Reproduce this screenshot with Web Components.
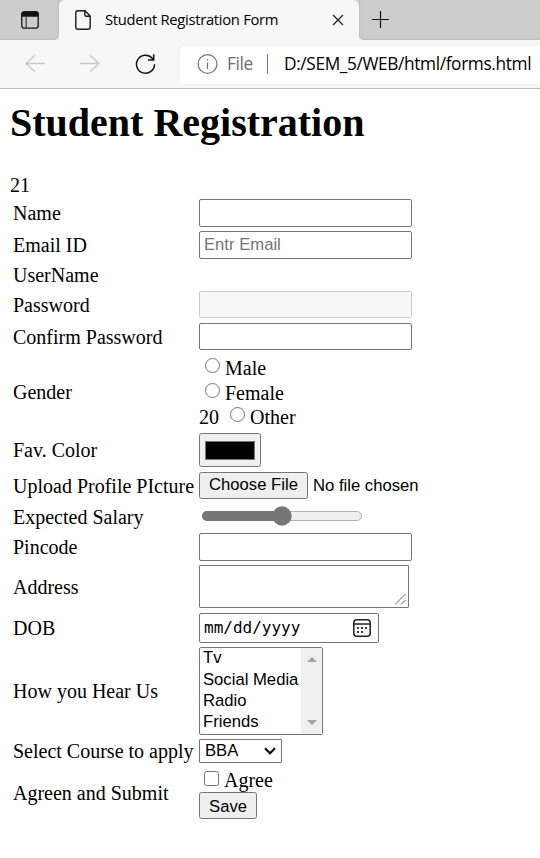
<!DOCTYPE html>
<html lang="en">
<head>
<meta charset="utf-8">
<title>Student Registration Form</title>
<style>
html,body{margin:0;height:100%;background:#fff;overflow:hidden}
body{font:20px/24px "Liberation Serif",serif;color:#000}
</style>
</head>
<body>
<browser-chrome>
  <span slot="title">Student Registration Form</span>
  <span slot="scheme">File</span>
  <span slot="url">D:/SEM_5/WEB/html/forms.html</span>
</browser-chrome>
<registration-page></registration-page>

<script>
const define = (name, html) => customElements.define(name, class extends HTMLElement {
  constructor() {
    super();
    const t = document.createElement('template');
    t.innerHTML = html;
    this.attachShadow({mode: 'open'}).append(t.content.cloneNode(true));
  }
});

define('browser-chrome', `
<style>
:host{display:block;height:89px;box-sizing:border-box;background:#f7f7f7;border-bottom:1px solid #bdbdbd;font-family:"Open Sans","Noto Sans",sans-serif;white-space:nowrap;overflow:hidden}
svg{display:block;fill:none;flex:none}
.tabs{display:flex;height:40px;background:#f7f7f7}
.left{width:59px;background:#cdcdcd;border-radius:0 0 5px 0;box-sizing:border-box;padding:11px 0 0 21px;box-shadow:inset -1px -1px 1px #bfbfbf}
.tab{width:300px;box-sizing:border-box;display:flex;align-items:center;padding:0 15px 0 16px;background:linear-gradient(#cdcdcd,#cdcdcd) 0 0/100% 8px no-repeat;position:relative;z-index:0}
.tab::before{content:"";position:absolute;inset:0;background:#f7f7f7;border-radius:6px 6px 0 0;z-index:-1}
.title{font-size:14.8px;line-height:20px;margin:0 auto 2px 14px;letter-spacing:-.31px}
.right{flex:1;background:#cdcdcd;border-radius:0 0 0 5px;padding:11px 0 0 13px;box-shadow:inset 1px -1px 1px #bfbfbf}
.bar{display:flex;height:48px;align-items:center;padding-left:25px;box-sizing:border-box}
.bar>svg+svg{margin-left:35px}
.addr{margin-left:24px;width:400px;height:38px;background:#fff;border-radius:5px 0 0 5px;display:flex;align-items:center;box-sizing:border-box;padding-left:17px;margin-top:1px;font-size:17.3px;box-shadow:0 0 2px #e6e6e6}
.scheme{margin:0 0 2px 9px;color:#6d6d6d;width:40px;letter-spacing:-.35px}
.rule{width:1px;height:20px;background:#777;flex:none;margin-bottom:1px}
.url{margin:0 0 2px 16px;letter-spacing:-.37px}
</style>
<div class="tabs">
 <div class="left"><svg width="18" height="18" stroke="#151515" stroke-width="1.3"><rect x=".8" y=".8" width="16.4" height="16.4" rx="2.5"/><path d="M1 2.8Q1 1 3 1H15Q17 1 17 2.8V5H1Z" fill="#111"/><path d="M5.2 5V17" stroke="#444"/></svg></div>
 <div class="tab">
  <svg width="16" height="20" stroke="#1b1b1b" stroke-width="1.4"><path d="M3 .8H10L15.2 6V17Q15.2 19.2 13 19.2H3Q.8 19.2.8 17V3Q.8.8 3 .8ZM9.8 1V4.5Q9.8 6.3 11.6 6.3H15"/></svg>
  <div class="title"><slot name="title"></slot></div>
  <svg width="12" height="12" stroke="#222" stroke-width="1.3"><path d="M1 1L11 11M11 1L1 11"/></svg>
 </div>
 <div class="right"><svg width="18" height="18" stroke="#111" stroke-width="1.2"><path d="M8.5 0V17M0 8.5H17"/></svg></div>
</div>
<div class="bar">
 <svg width="20" height="18" stroke="#c9c9c9" stroke-width="1.3"><path d="M20 8.5H1M10 .2L1 8.5L10 16.8"/></svg>
 <svg width="20" height="18" stroke="#c9c9c9" stroke-width="1.3"><path d="M0 8.5H19M10 .2L19 8.5L10 16.8"/></svg>
 <svg width="21" height="21" stroke="#151515" stroke-width="1.5"><path d="M19.5 10.2A9 9 0 1 1 17.2 4.2L18.4 5.6M18.7 .3V6H13"/></svg>
 <div class="addr">
  <svg width="21" height="21" stroke="#747474" stroke-width="1.2"><circle cx="10.5" cy="10" r="9.4"/><path d="M10.5 8.5V15M10.5 5V6.5"/></svg>
  <div class="scheme"><slot name="scheme"></slot></div><div class="rule"></div><div class="url"><slot name="url"></slot></div>
 </div>
</div>`);

customElements.define('form-row', class extends HTMLElement {
  constructor() {
    super();
    this.attachShadow({mode: 'open'}).innerHTML = `
<style>
:host{display:grid;grid-template-columns:186px 1fr;align-items:center;height:${this.getAttribute('h')}px;margin-bottom:${this.getAttribute('gap') || 4}px;white-space:nowrap}
.control{display:flex;align-items:center;height:100%}
</style>
<div><slot name="label"></slot></div><div class="control"><slot></slot></div>`;
  }
});

define('text-box', `
<style>
:host{display:block;box-sizing:border-box;width:213px;height:100%;border:1px solid #767676;border-radius:2px;font:16.67px/26px "Liberation Sans",sans-serif;color:#757575;padding-left:4px}
:host([disabled]){border-color:#cbcbcb;background:#f8f8f8}
</style><slot></slot>`);

define('push-button', `
<style>
:host{display:inline-block}
button{display:block;box-sizing:border-box;height:27px;width:100%;border:1px solid #767676;border-radius:2.5px;background:#efefef;color:#000;padding:var(--label-drop,0) 0 0;font:16.67px/23px "Liberation Sans",sans-serif}
:host([raised]) button{padding-bottom:2px}
</style><button><slot></slot></button>`);

define('choice-mark', `
<style>
:host{display:inline-block;box-sizing:border-box;width:15px;height:15px;border:1.2px solid #767676;border-radius:50%;background:#fff}
:host([square]){border-radius:2.5px}
</style>`);

define('gender-choices', `
<style>
:host{display:block;padding-top:2px}
.line{display:flex;height:24.6px;line-height:24.6px}
choice-mark{margin:2px 5px 0 6px}
</style>
<div class="line"><choice-mark></choice-mark><span>Male</span></div>
<div class="line"><choice-mark></choice-mark><span>Female</span></div>
<div class="line"><span>20</span><choice-mark style="margin-left:11px"></choice-mark><span>Other</span></div>`);

define('color-well', `
<style>
:host{display:grid;place-items:center;box-sizing:border-box;width:62px;height:34px;border:1px solid #767676;border-radius:2.5px;background:#efefef}
div{box-sizing:border-box;width:50px;height:19px;border:1px solid #777;background:#000;margin-top:1px}
</style><div></div>`);

define('salary-slider', `
<style>:host{display:block}svg{display:block}</style>
<svg width="166" height="25"><rect x="3.5" y="7.5" width="159" height="9" rx="4.5" fill="#efefef" stroke="#b2b2b2"/><path d="M83 7H8A5 5 0 0 0 8 17H83Z" fill="#767676"/><circle cx="83" cy="12" r="9.7" fill="#767676"/></svg>`);

define('text-area', `
<style>:host{display:flex;align-items:flex-end;justify-content:flex-end;box-sizing:border-box;width:210px;height:43px;border:1px solid #767676;border-radius:1px;padding:0 2px 2px 0}svg{display:block}</style>
<svg width="11" height="11" stroke="#666" stroke-width="1"><path d="M0 10.5L10.5 0M6 10.5L10.5 6"/></svg>`);

define('date-box', `
<style>
:host{display:flex;align-items:center;justify-content:space-between;box-sizing:border-box;width:180px;height:30px;border:1px solid #767676;border-radius:2px;padding:0 7px 0 4px;font:16px/24px "DejaVu Sans Mono",monospace}
svg{display:block}
</style>
<span><slot></slot></span>
<svg width="18" height="18" fill="none" stroke="#222" stroke-width="1.5"><rect x=".8" y=".8" width="16.4" height="16.4" rx="3"/><path d="M1 5H17"/><g fill="#111" stroke="none"><circle cx="9" cy="9" r="1.1"/><circle cx="13" cy="9" r="1.1"/><circle cx="5" cy="9" r="1.1"/><circle cx="5" cy="13" r="1.1"/><circle cx="9" cy="13" r="1.1"/></g></svg>`);

define('list-box', `
<style>
:host{display:flex;justify-content:space-between;box-sizing:border-box;width:124px;height:88px;border:1px solid #767676;border-radius:2px;font:16.67px/21.25px "Liberation Sans",sans-serif;overflow:hidden}
.items{padding-left:3px;margin-top:-.6px}
.scroll{width:21px;background:#f0f0f0;display:flex;flex-direction:column;justify-content:space-between;align-items:center;box-sizing:border-box;padding:9px 0}
</style>
<div class="items"><div>Tv</div><div>Social Media</div><div>Radio</div><div>Friends</div></div>
<div class="scroll"><svg width="10" height="5"><path d="M0 5L5 0L10 5Z" fill="#a3a3a3"/></svg><svg width="10" height="5"><path d="M0 0L5 5L10 0Z" fill="#a3a3a3"/></svg></div>`);

define('drop-down', `
<style>
:host{display:flex;align-items:center;justify-content:space-between;box-sizing:border-box;width:83px;height:24px;border:1px solid #767676;border-radius:1px;padding:0 5px;font:16.67px/22px "Liberation Sans",sans-serif}
</style><span><slot></slot></span><svg width="12" height="8" fill="none" stroke="#000" stroke-width="2"><path d="M1 1.3L6 6.3L11 1.3"/></svg>`);

define('agree-submit', `
<style>
:host{display:block;height:52px}
.line{display:flex;height:25px;line-height:27px}
choice-mark{margin:4px 5px 0}
push-button{display:block;width:58px;--label-drop:1px}
</style>
<div class="line"><choice-mark square></choice-mark><span>Agree</span></div>
<push-button>Save</push-button>`);

define('registration-page', `
<style>
:host{display:block;padding:11px 10px 0}
h1{margin:0;font-size:40px;line-height:46px;font-weight:bold;height:73px}
.count{height:26px;line-height:24px}
.form{padding-left:3px}
.nofile{font:16.67px/27px "Liberation Sans",sans-serif;margin-left:5px}
</style>
<h1>Student Registration</h1>
<div class="count">21</div>
<div class="form">
<form-row h="28"><span slot="label">Name</span><text-box></text-box></form-row>
<form-row h="28"><span slot="label">Email ID</span><text-box>Entr Email</text-box></form-row>
<form-row h="24"><span slot="label">UserName</span></form-row>
<form-row h="27" gap="5"><span slot="label">Password</span><text-box disabled></text-box></form-row>
<form-row h="27"><span slot="label">Confirm Password</span><text-box></text-box></form-row>
<form-row h="75"><span slot="label">Gender</span><gender-choices></gender-choices></form-row>
<form-row h="34" gap="5"><span slot="label">Fav. Color</span><color-well></color-well></form-row>
<form-row h="27" gap="5"><span slot="label">Upload Profile PIcture</span><push-button raised style="width:109px">Choose File</push-button><span class="nofile">No file chosen</span></form-row>
<form-row h="25"><span slot="label">Expected Salary</span><salary-slider></salary-slider></form-row>
<form-row h="28"><span slot="label">Pincode</span><text-box></text-box></form-row>
<form-row h="43" gap="5"><span slot="label">Address</span><text-area></text-area></form-row>
<form-row h="30"><span slot="label">DOB</span><date-box>mm/dd/yyyy</date-box></form-row>
<form-row h="88"><span slot="label">How you Hear Us</span><list-box></list-box></form-row>
<form-row h="24"><span slot="label">Select Course to apply</span><drop-down>BBA</drop-down></form-row>
<form-row h="52"><span slot="label">Agreen and Submit</span><agree-submit></agree-submit></form-row>
</div>`);
</script>
</body>
</html>
